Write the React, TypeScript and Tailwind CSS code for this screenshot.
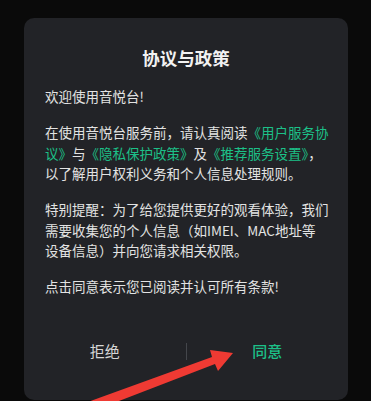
import React from "react";

const font = { fontFamily: '"Noto Sans CJK SC", "Noto Sans", sans-serif' };

export default function App() {
  return (
    <div
      className="relative w-[371px] h-[401px] overflow-hidden bg-[#0a0a0a] pt-[18px] pl-[24px]"
      style={font}
    >
      <div className="w-[324px] h-[382px] rounded-[10px] bg-[#222327] flex flex-col pt-[28px] px-[20px]">
        <div className="text-center text-[17.5px] leading-[24px] font-bold text-[#f2f2f2]">
          协议与政策
        </div>
        <div className="mt-[16px] flex flex-col gap-[15.5px] text-[13.5px] leading-[20.5px] text-[#e3e3e3] pl-[1px] w-[285px]">
          <p>欢迎使用音悦台!</p>
          <p>
            在使用音悦台服务前，请认真阅读
            <span className="text-[#1cc088]">《用户服务协议》</span>与
            <span className="text-[#1cc088]">《隐私保护政策》</span>及
            <span className="text-[#1cc088]">《推荐服务设置》</span>，以了解用户权利义务和个人信息处理规则。
          </p>
          <p>
            特别提醒：为了给您提供更好的观看体验，我们需要收集您的个人信息（如IMEI、MAC地址等
            <br />
            设备信息）并向您请求相关权限。
          </p>
          <p>点击同意表示您已阅读并认可所有条款!</p>
        </div>
        <div className="mt-[31px] -mx-[20px] flex items-center h-[48px]">
          <div className="flex-1 text-center text-[15px] text-[#d6d6d6]">拒绝</div>
          <div className="w-px h-[17px] bg-[#44464b]" />
          <div className="flex-1 text-center text-[15px] font-medium text-[#1cc088]">同意</div>
        </div>
      </div>
      <svg
        className="absolute left-0 top-0 pointer-events-none"
        width="371"
        height="401"
        viewBox="0 0 371 401"
      >
        <polygon
          points="85,403 212,357 210,350 233,353 218,371 215,364 93,411"
          fill="#ef3a33"
        />
      </svg>
    </div>
  );
}
